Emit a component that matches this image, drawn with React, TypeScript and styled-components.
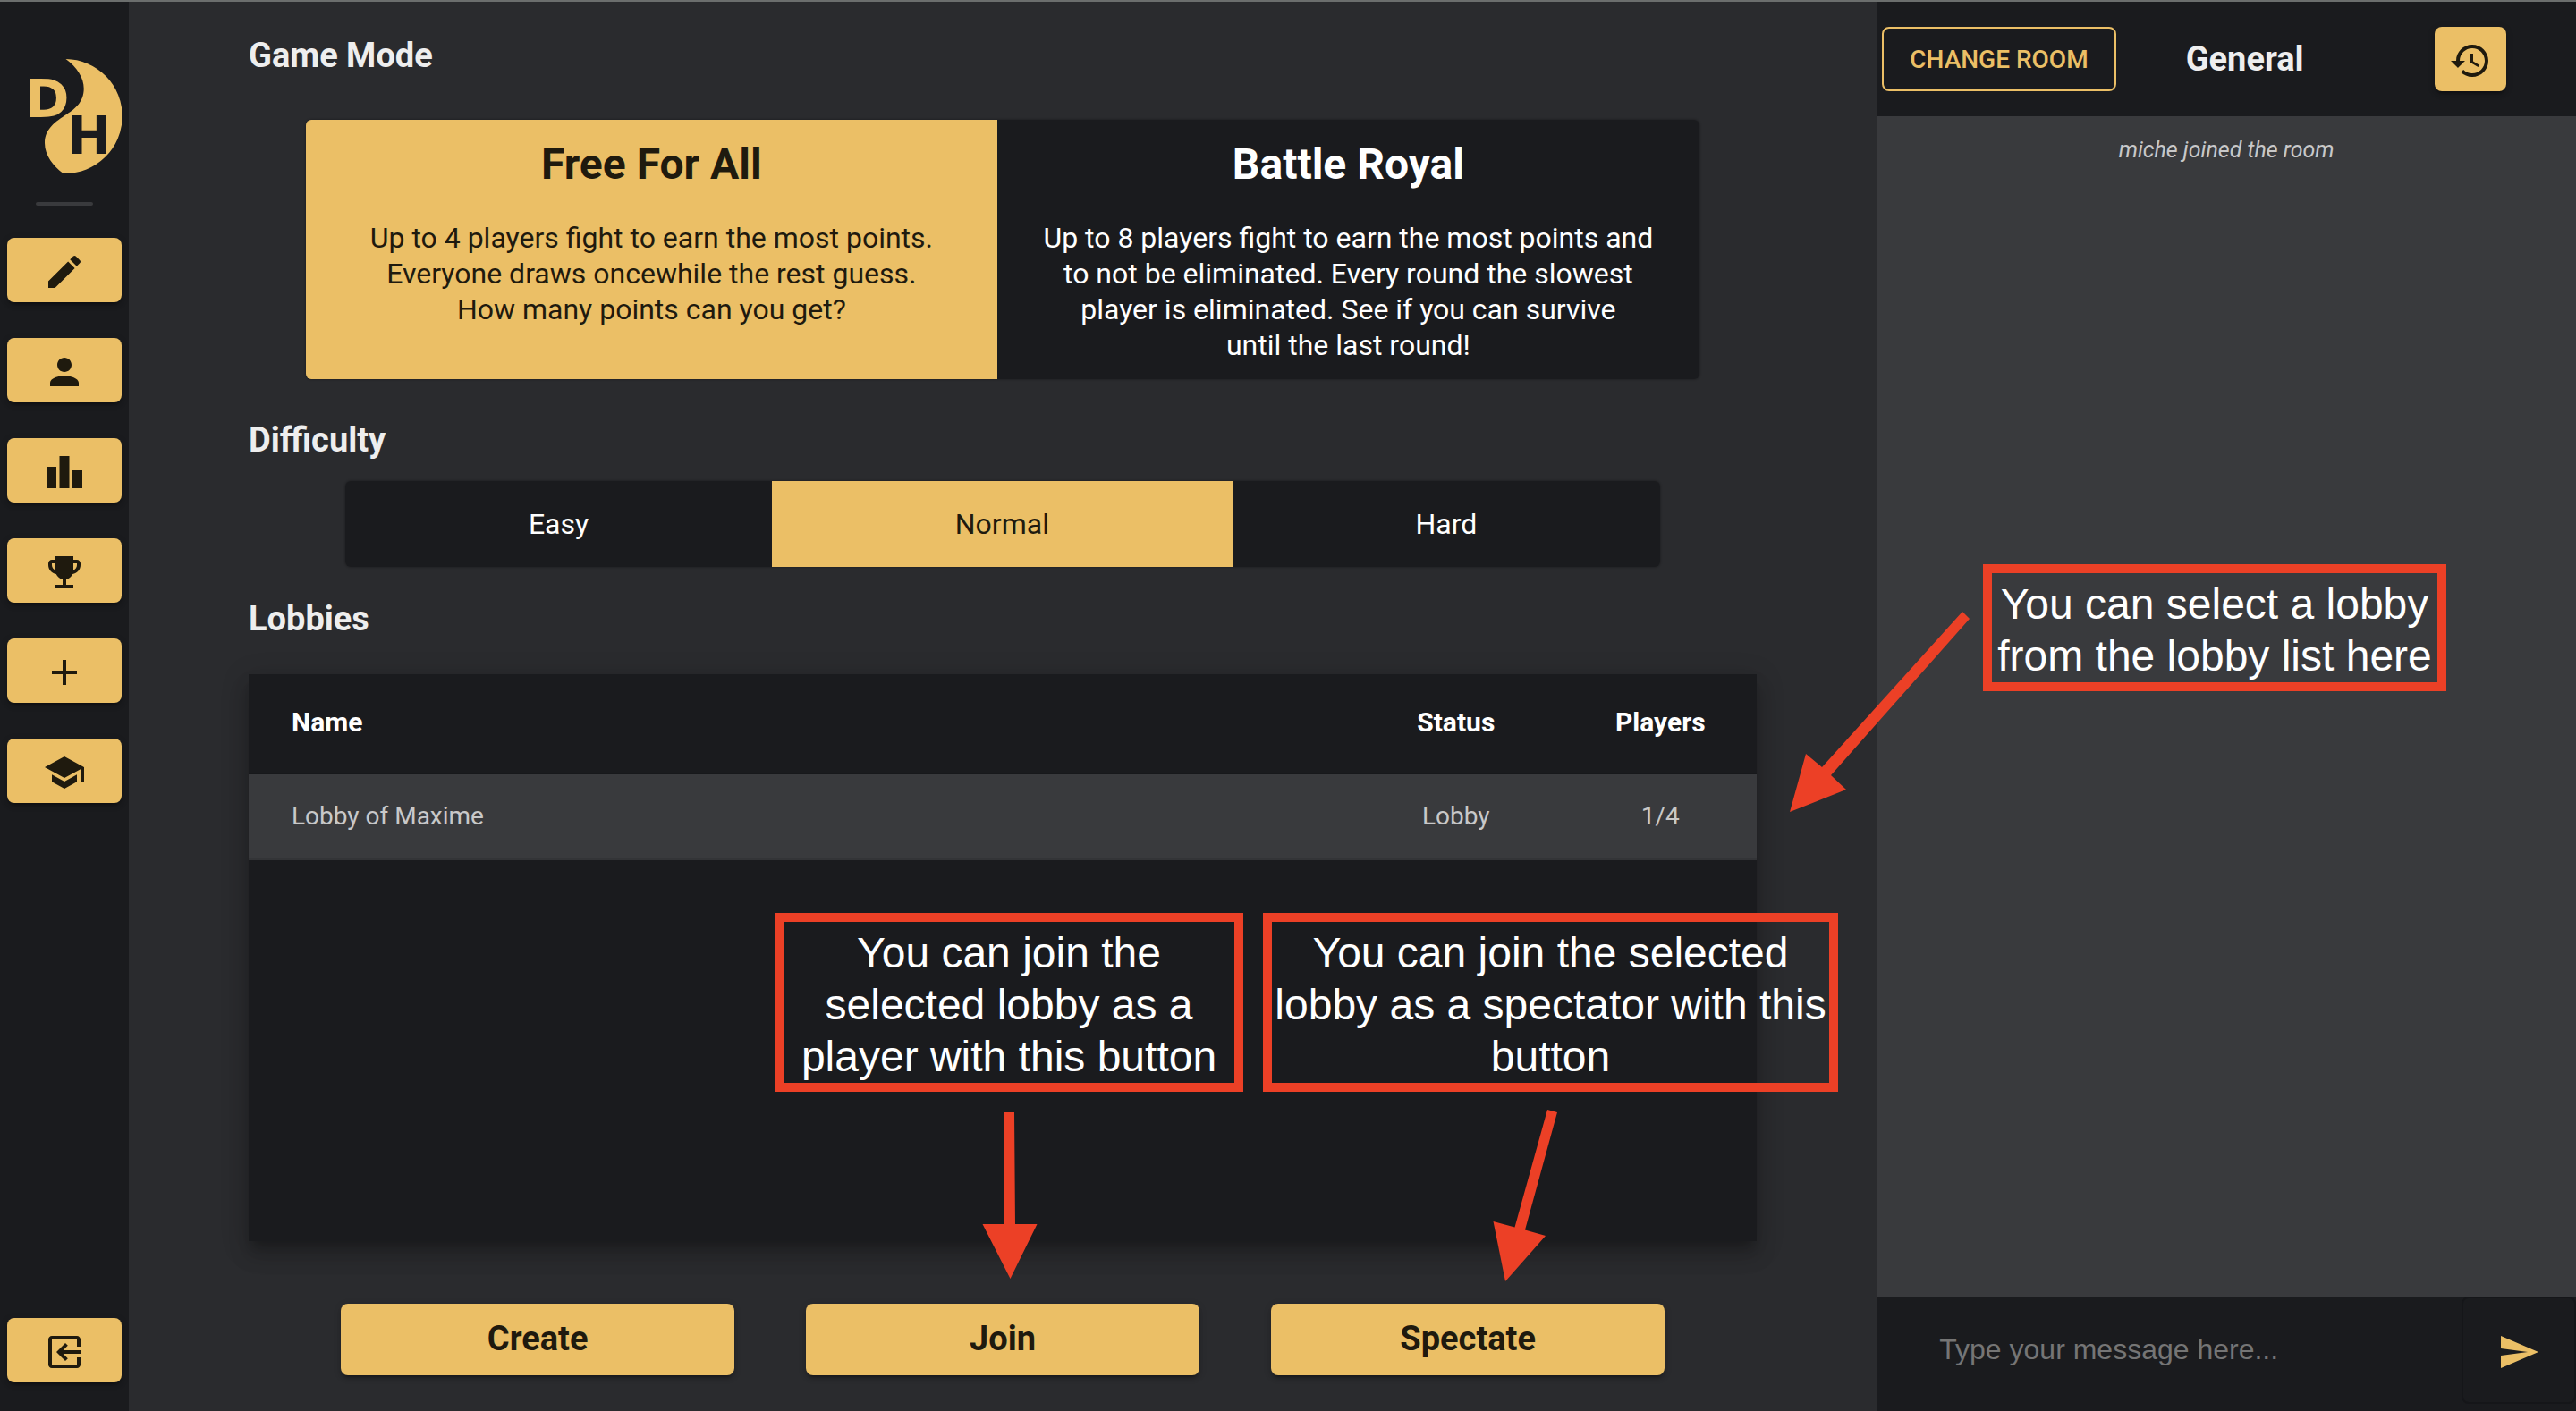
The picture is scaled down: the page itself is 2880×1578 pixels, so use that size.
import React, { useState } from 'react';
import styled, { createGlobalStyle, css } from 'styled-components';

const color = {
  accent: '#ebbf66',
  ink: '#1f1a0e',
  dark: '#1a1b1e',
  page: '#2a2b2e',
  panel: '#393a3d',
  text: '#eeeeee',
  muted: '#c8c8c9',
  note: '#ec4026',
};

const raised = css`
  box-shadow: 0 6px 2px -4px rgba(0, 0, 0, 0.2), 0 4px 4px rgba(0, 0, 0, 0.14),
    0 2px 10px rgba(0, 0, 0, 0.12);
`;

const GlobalStyle = createGlobalStyle`
  *, *::before, *::after { box-sizing: border-box; }
  body {
    margin: 0;
    background: ${color.page};
    color: ${color.text};
    font-family: Roboto, sans-serif;
  }
  button, input { font-family: inherit; }
  button { cursor: pointer; }
`;

const Page = styled.div`
  position: relative;
  display: grid;
  grid-template-columns: 144px minmax(0, 5fr) minmax(0, 2fr);
  min-height: 100vh;
  border-top: 2px solid #6b6e6d;
`;

/* Sidebar */

const Sidebar = styled.nav`
  display: flex;
  flex-direction: column;
  align-items: center;
  padding: 64px 8px 32px;
  background: ${color.dark};
`;

const Logo = styled.svg`
  width: 128px;
  height: 128px;
`;

const LogoLetter = styled.text`
  font: bold 59px 'DejaVu Sans', sans-serif;
`;

const Divider = styled.hr`
  width: 64px;
  height: 4px;
  margin: 32px 0 36px;
  border: 0;
  border-radius: 2px;
  background: ${color.panel};
`;

const NavList = styled.div`
  display: flex;
  flex: 1;
  flex-direction: column;
  gap: 40px;
  width: 100%;
`;

const IconButton = styled.button<{ $last?: boolean; $width?: string }>`
  display: flex;
  justify-content: center;
  width: ${(p) => p.$width ?? '100%'};
  height: 72px;
  margin-top: ${(p) => (p.$last ? 'auto' : '0')};
  padding: 14px 0 10px;
  border: 0;
  border-radius: 8px;
  background: ${color.accent};
  color: ${color.ink};
  ${raised}
`;

const Glyph = styled.svg`
  display: block;
  width: 48px;
  height: 48px;
  fill: currentColor;
`;

/* Game options */

const Main = styled.main`
  display: flex;
  flex-direction: column;
  align-items: center;
  padding: 36px 134px 40px;
`;

const Heading = styled.h2<{ $top?: number; $bottom: number }>`
  align-self: flex-start;
  margin: ${(p) => p.$top ?? 0}px 0 ${(p) => p.$bottom}px;
  font-size: 38px;
  font-weight: 700;
  line-height: 48px;
`;

const ToggleGroup = styled.div<{ $width: number }>`
  display: flex;
  width: 100%;
  max-width: ${(p) => p.$width}px;
  overflow: hidden;
  border-radius: 6px;
  box-shadow: 0 0 2px 1px rgba(0, 0, 0, 0.2);
`;

const Toggle = styled.button<{ $active: boolean }>`
  flex: 1 1 auto;
  padding: 0;
  border: 0;
  background: ${(p) => (p.$active ? color.accent : color.dark)};
  color: ${(p) => (p.$active ? color.ink : '#ffffff')};
  font-size: 32px;
  line-height: 40px;
`;

const ModeToggle = styled(Toggle)<{ $grow: number }>`
  display: flex;
  flex: ${(p) => p.$grow} 1 0;
  flex-direction: column;
  align-items: center;
  padding: 18px 24px;
`;

const LevelToggle = styled(Toggle)`
  height: 96px;
`;

const ModeName = styled.strong`
  margin-bottom: 30px;
  font-size: 48px;
  font-weight: 700;
  line-height: 64px;
`;

/* Lobby list */

const LobbyList = styled.div`
  flex: 1 1 auto;
  width: 100%;
  min-height: 400px;
  background: ${color.dark};
  box-shadow: 0 10px 10px -6px rgba(0, 0, 0, 0.2), 0 16px 20px 2px rgba(0, 0, 0, 0.14),
    0 6px 28px 4px rgba(0, 0, 0, 0.12);
`;

const Table = styled.table`
  width: 100%;
  border-collapse: separate;
  border-spacing: 0;
  table-layout: fixed;
`;

const HeadCell = styled.th<{ $width?: number }>`
  width: ${(p) => (p.$width ? `${p.$width}px` : 'auto')};
  height: 112px;
  padding: 0 0 4px;
  border-bottom: 2px solid #17181b;
  color: #ffffff;
  font-size: 30px;
  font-weight: 700;
  text-align: center;

  &:first-child {
    padding-left: 48px;
    text-align: left;
  }
`;

const Row = styled.tr`
  background: ${color.panel};
`;

const Cell = styled.td`
  height: 96px;
  padding: 0 0 2px;
  border-bottom: 2px solid #333437;
  color: ${color.muted};
  font-size: 28px;
  text-align: center;

  &:first-child {
    padding-left: 48px;
    text-align: left;
  }
`;

const Actions = styled.div`
  display: flex;
  gap: 80px;
  margin-top: 70px;
`;

const ActionButton = styled.button`
  width: 440px;
  height: 80px;
  padding: 0 0 2px;
  border: 0;
  border-radius: 8px;
  background: ${color.accent};
  color: ${color.ink};
  font-size: 38px;
  font-weight: 700;
  line-height: 72px;
  ${raised}
`;

/* Chat */

const Chat = styled.aside`
  display: flex;
  flex-direction: column;
  background: ${color.panel};
`;

const ChatHeader = styled.header`
  display: flex;
  align-items: center;
  height: 128px;
  padding: 0 78px 0 6px;
  background: ${color.dark};
`;

const RoomButton = styled.button`
  height: 72px;
  padding: 0 29px;
  border: 2px solid ${color.accent};
  border-radius: 8px;
  background: transparent;
  color: ${color.accent};
  font-size: 28px;
  font-weight: 500;
  white-space: nowrap;
`;

const RoomName = styled.h2`
  flex: 1;
  margin: 0 0 0 78px;
  font-size: 38px;
  font-weight: 700;
  line-height: 48px;
`;

const Messages = styled.div`
  flex: 1;
  padding: 20px 24px;
`;

const Notice = styled.p`
  margin: 0;
  color: ${color.muted};
  font-size: 25px;
  font-style: italic;
  line-height: 36px;
  text-align: center;
`;

const Composer = styled.form`
  display: flex;
  align-items: flex-start;
  height: 128px;
  background: ${color.dark};
`;

const MessageInput = styled.input`
  flex: 1;
  min-width: 0;
  height: 118px;
  padding: 0 0 0 70px;
  border: 0;
  outline: 0;
  background: transparent;
  color: ${color.text};
  font-family: 'Liberation Sans', Arial, sans-serif;
  font-size: 32px;

  &::placeholder {
    color: #757575;
    opacity: 1;
  }
`;

const SendButton = styled.button`
  display: flex;
  justify-content: center;
  width: 128px;
  height: 120px;
  padding: 36px 0 0;
  border: 2px solid #151619;
  border-radius: 8px;
  background: transparent;
  color: ${color.accent};
`;

/* Help annotations drawn over the page */

const Note = styled.p<{ $x: number; $y: number; $width: number }>`
  position: absolute;
  top: ${(p) => p.$y}px;
  left: ${(p) => p.$x}px;
  width: ${(p) => p.$width}px;
  margin: 0;
  padding: 6px 0 0;
  border: 10px solid ${color.note};
  color: #ffffff;
  font-family: 'Liberation Sans', Helvetica, Arial, sans-serif;
  font-size: 48px;
  line-height: 58px;
  text-align: center;
  white-space: nowrap;
`;

const Arrow = styled.svg<{ $x: number; $y: number }>`
  position: absolute;
  top: ${(p) => p.$y}px;
  left: ${(p) => p.$x}px;
  fill: ${color.note};
  pointer-events: none;
`;

const paths = {
  edit: 'M3 17.25V21h3.75L17.81 9.94l-3.75-3.75L3 17.25zM20.71 7.04c.39-.39.39-1.02 0-1.41l-2.34-2.34c-.39-.39-1.02-.39-1.41 0l-1.83 1.83 3.75 3.75 1.83-1.83z',
  person:
    'M12 12c2.21 0 4-1.79 4-4s-1.79-4-4-4-4 1.79-4 4 1.79 4 4 4zm0 2c-2.67 0-8 1.34-8 4v2h16v-2c0-2.66-5.33-4-8-4z',
  leaderboard: 'M7.5 21H2V9h5.5v12zm7.25-18h-5.5v18h5.5V3zM22 11h-5.5v10H22V11z',
  trophy:
    'M19 5h-2V3H7v2H5c-1.1 0-2 .9-2 2v1c0 2.55 1.92 4.63 4.39 4.94.63 1.5 1.98 2.63 3.61 2.96V19H7v2h10v-2h-4v-3.1c1.63-.33 2.98-1.46 3.61-2.96C19.08 12.63 21 10.55 21 8V7c0-1.1-.9-2-2-2zM5 8V7h2v3.82C5.84 10.4 5 9.3 5 8zm14 0c0 1.3-.84 2.4-2 2.82V7h2v1z',
  add: 'M19 13h-6v6h-2v-6H5v-2h6V5h2v6h6v2z',
  school: 'M5 13.18v4L12 21l7-3.82v-4L12 17l-7-3.82zM12 3L1 9l11 6 9-4.91V17h2V9L12 3z',
  exit: 'M13.91 15.59L12.5 17l-5-5 5-5 1.41 1.41L11.33 11H21v2h-9.67l2.58 2.59zM5 3h14c1.11 0 2 .9 2 2v4h-2V5H5v14h14v-4h2v4c0 1.1-.89 2-2 2H5c-1.1 0-2-.9-2-2V5c0-1.1.9-2 2-2z',
  history:
    'M13 3c-4.97 0-9 4.03-9 9H1l3.89 3.89.07.14L9 12H6c0-3.87 3.13-7 7-7s7 3.13 7 7-3.13 7-7 7c-1.93 0-3.68-.79-4.94-2.06l-1.42 1.42C8.27 19.99 10.51 21 13 21c4.97 0 9-4.03 9-9s-4.03-9-9-9zm-1 5v5l4.28 2.54.72-1.21-3.5-2.08V8H12z',
  send: 'M2.01 21L23 12 2.01 3 2 10l15 2-15 2z',
};

const Icon = ({ name }: { name: keyof typeof paths }) => (
  <Glyph viewBox="0 0 24 24" aria-hidden="true">
    <path d={paths[name]} />
  </Glyph>
);

const navItems: { icon: keyof typeof paths; label: string }[] = [
  { icon: 'edit', label: 'Play' },
  { icon: 'person', label: 'Profile' },
  { icon: 'leaderboard', label: 'Leaderboard' },
  { icon: 'trophy', label: 'Trophies' },
  { icon: 'add', label: 'New drawing' },
  { icon: 'school', label: 'Tutorial' },
];

const modes = [
  {
    name: 'Free For All',
    grow: 386,
    lines: [
      'Up to 4 players fight to earn the most points.',
      'Everyone draws oncewhile the rest guess.',
      'How many points can you get?',
    ],
  },
  {
    name: 'Battle Royal',
    grow: 393,
    lines: [
      'Up to 8 players fight to earn the most points and',
      'to not be eliminated. Every round the slowest',
      'player is eliminated. See if you can survive',
      'until the last round!',
    ],
  },
];

const levels = ['Easy', 'Normal', 'Hard'];

const lobbies = [{ name: 'Lobby of Maxime', status: 'Lobby', players: '1/4' }];

export default function App() {
  const [mode, setMode] = useState('Free For All');
  const [level, setLevel] = useState('Normal');

  return (
    <Page>
      <GlobalStyle />

      <Sidebar>
        <Logo viewBox="8 66 128 128" role="img" aria-label="DH">
          <path
            fill={color.accent}
            d="M73.5 66A64 64 0 0 1 72 194L70 193.4C60 186 50 174 50 160C50 144 62 136 75 127.5C84 121.500 93.700 114 93.700 99C93.700 87 86 75 73.500 66Z"
          />
          <LogoLetter x="28.500" y="131" fill={color.accent}>
            D
          </LogoLetter>
          <LogoLetter x="75" y="172" fill={color.dark}>
            H
          </LogoLetter>
        </Logo>
        <Divider />
        <NavList>
          {navItems.map((item) => (
            <IconButton key={item.icon} type="button" aria-label={item.label}>
              <Icon name={item.icon} />
            </IconButton>
          ))}
          <IconButton type="button" aria-label="Log out" $last>
            <Icon name="exit" />
          </IconButton>
        </NavList>
      </Sidebar>

      <Main>
        <Heading $bottom={48}>Game Mode</Heading>
        <ToggleGroup $width={1558} role="group" aria-label="Game Mode">
          {modes.map((m) => (
            <ModeToggle
              key={m.name}
              type="button"
              $grow={m.grow}
              $active={mode === m.name}
              aria-pressed={mode === m.name}
              onClick={() => setMode(m.name)}
            >
              <ModeName>{m.name}</ModeName>
              {m.lines.map((line) => (
                <span key={line}>{line}</span>
              ))}
            </ModeToggle>
          ))}
        </ToggleGroup>

        <Heading $top={44} $bottom={22}>
          Difficulty
        </Heading>
        <ToggleGroup $width={1470} role="group" aria-label="Difficulty">
          {levels.map((l) => (
            <LevelToggle
              key={l}
              type="button"
              $active={level === l}
              aria-pressed={level === l}
              onClick={() => setLevel(l)}
            >
              {l}
            </LevelToggle>
          ))}
        </ToggleGroup>

        <Heading $top={34} $bottom={38}>
          Lobbies
        </Heading>
        <LobbyList>
          <Table>
            <thead>
              <tr>
                <HeadCell scope="col">Name</HeadCell>
                <HeadCell scope="col" $width={241}>
                  Status
                </HeadCell>
                <HeadCell scope="col" $width={216}>
                  Players
                </HeadCell>
              </tr>
            </thead>
            <tbody>
              {lobbies.map((lobby) => (
                <Row key={lobby.name}>
                  <Cell>{lobby.name}</Cell>
                  <Cell>{lobby.status}</Cell>
                  <Cell>{lobby.players}</Cell>
                </Row>
              ))}
            </tbody>
          </Table>
        </LobbyList>

        <Actions>
          <ActionButton type="button">Create</ActionButton>
          <ActionButton type="button">Join</ActionButton>
          <ActionButton type="button">Spectate</ActionButton>
        </Actions>
      </Main>

      <Chat>
        <ChatHeader>
          <RoomButton type="button">CHANGE ROOM</RoomButton>
          <RoomName>General</RoomName>
          <IconButton type="button" aria-label="History" $width="80px">
            <Icon name="history" />
          </IconButton>
        </ChatHeader>
        <Messages>
          <Notice>miche joined the room</Notice>
        </Messages>
        <Composer onSubmit={(e: React.FormEvent) => e.preventDefault()}>
          <MessageInput aria-label="Message" placeholder="Type your message here..." />
          <SendButton type="submit" aria-label="Send">
            <Icon name="send" />
          </SendButton>
        </Composer>
      </Chat>

      <Note $x={2217} $y={629} $width={518}>
        You can select a lobby
        <br />
        from the lobby list here
      </Note>
      <Arrow $x={2000} $y={680} width="204" height="230" viewBox="2000 682 204 230">
        <path d="M2194 684L2202 692L2047 867L2064 883L2001 908L2019 843L2037 858Z" />
      </Arrow>

      <Note $x={866} $y={1019} $width={524}>
        You can join the
        <br />
        selected lobby as a
        <br />
        player with this button
      </Note>
      <Arrow $x={1098} $y={1240} width="64" height="190" viewBox="1098 1242 64 190">
        <path d="M1122 1244H1134L1135 1369H1159.500L1129.500 1430L1098.500 1369H1123Z" />
      </Arrow>

      <Note $x={1412} $y={1019} $width={643}>
        You can join the selected
        <br />
        lobby as a spectator with this
        <br />
        button
      </Note>
      <Arrow $x={1668} $y={1238} width="76" height="196" viewBox="1668 1240 76 196">
        <path d="M1730 1241L1741 1244L1705 1375.500L1728 1382L1683 1433L1669.500 1366L1693.500 1372.500Z" />
      </Arrow>
    </Page>
  );
}
